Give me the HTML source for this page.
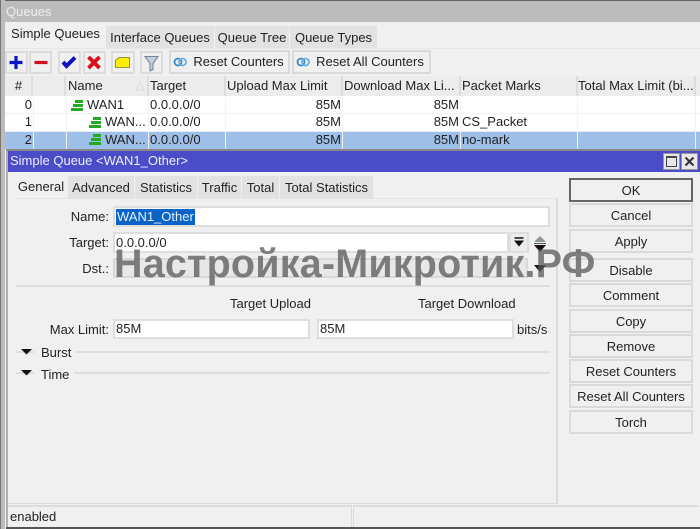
<!DOCTYPE html>
<html><head><meta charset="utf-8"><style>
html,body{margin:0;padding:0;width:700px;height:529px;overflow:hidden;background:#f0f0f0}
#r{position:relative;width:700px;height:529px;overflow:hidden;font:13px "Liberation Sans",sans-serif;color:#222;filter:blur(.35px)}
#r div,#r svg{position:absolute;box-sizing:border-box}
.t{white-space:nowrap;line-height:16px}
.tab{background:#e2e2e2;text-align:center;line-height:21px;white-space:nowrap}
.b{border:2px solid #dcdcdc;background:#f0f0f0}
.bt{border:2px solid #dadada;background:#f0f0f0;text-align:center;line-height:21px;white-space:nowrap}
.h{background:#ececec;border-right:2px solid #dcdcdc;line-height:20px;white-space:nowrap;padding-left:1px;top:76px;height:20px}
.c{white-space:nowrap;line-height:17px;height:17px}
.v{background:#f2f2f2;width:1px}
.f{background:#fff;border:2px solid #dedede;line-height:16px;padding-left:1px;white-space:nowrap}
.l{text-align:right;line-height:16px;white-space:nowrap}
.s{background:#dedede;height:2px}
</style></head><body><div id="r">
<div style="left:0;top:0;width:700px;height:22px;background:#bcbcbc"></div>
<div style="left:0;top:0;width:700px;height:1px;background:#666"></div>
<div style="left:0;top:0;width:1px;height:529px;background:#777"></div>
<div style="left:1px;top:0;width:4px;height:529px;background:#bcbcbc"></div>
<div class="t" style="left:6px;top:4px;color:#eee;font-size:13px">Queues</div>

<div class="tab" style="left:5px;top:22px;width:101px;height:27px;background:#f0f0f0;line-height:24px;color:#222">Simple Queues</div>
<div class="tab" style="left:106px;top:26px;width:108px;height:22px;line-height:24px">Interface Queues</div>
<div class="tab" style="left:215px;top:26px;width:74px;height:22px;line-height:24px">Queue Tree</div>
<div class="tab" style="left:290px;top:26px;width:87px;height:22px;line-height:24px">Queue Types</div>
<div style="left:5px;top:48px;width:695px;height:1px;background:#e6e6e6"></div>

<div class="b" style="left:5px;top:51px;width:23px;height:23px"></div>
<div class="b" style="left:29px;top:51px;width:23px;height:23px"></div>
<div class="b" style="left:58px;top:51px;width:23px;height:23px"></div>
<div class="b" style="left:83px;top:51px;width:23px;height:23px"></div>
<div class="b" style="left:111px;top:51px;width:24px;height:23px"></div>
<div class="b" style="left:140px;top:51px;width:23px;height:23px"></div>
<div class="bt" style="left:169px;top:50px;width:121px;height:24px;line-height:20px;padding-left:18px">Reset Counters</div>
<div class="bt" style="left:292px;top:50px;width:139px;height:24px;line-height:20px;padding-left:17px">Reset All Counters</div>

<svg style="left:0;top:48px" width="440" height="30" viewBox="0 48 440 30">
<path d="M16 56v13M9.500 62.500h13" stroke="#0a14c8" stroke-width="3.200" fill="none"/>
<path d="M34.500 62.500h13" stroke="#d0101c" stroke-width="3.200" fill="none"/>
<path d="M63 62l3.500 4L75 57.500" stroke="#0a10c0" stroke-width="4" fill="none"/>
<path d="M88.500 57l11 11M99.500 57l-11 11" stroke="#d81018" stroke-width="3.800" fill="none"/>
<path d="M115.500 60.500l3-3h11v10h-14z" fill="#fbee00" stroke="#77772a" stroke-width=".8"/>
<path d="M145 56.500h13l-5 7v6l-3 1.500v-7.500z" fill="#c4cee0" stroke="#7c8698" stroke-width="1.100"/>
<g fill="none" stroke-width="1.800"><circle cx="178" cy="62" r="3.500" stroke="#3a8ac8"/><circle cx="182.500" cy="62" r="3.500" stroke="#6ab0dc"/><circle cx="301" cy="62" r="3.500" stroke="#3a8ac8"/><circle cx="305.500" cy="62" r="3.500" stroke="#6ab0dc"/></g>
</svg>

<div style="left:5px;top:76px;width:695px;height:73px;background:#fff"></div>
<div class="h" style="left:5px;width:28px;text-align:center">#</div>
<div class="h" style="left:33px;width:33px"></div>
<div class="h" style="left:66px;width:83px;padding-left:2px">Name</div>
<div class="h" style="left:149px;width:77px">Target</div>
<div class="h" style="left:226px;width:117px">Upload Max Limit</div>
<div class="h" style="left:343px;width:118px">Download Max Li...</div>
<div class="h" style="left:461px;width:117px">Packet Marks</div>
<div class="h" style="left:578px;width:118px;padding-left:0">Total Max Limit (bi...</div>
<div class="h" style="left:696px;width:4px;border:0"></div>
<svg style="left:134px;top:80px" width="12" height="12"><path d="M2 10L6 2l4 8z" fill="none" stroke="#ddd"/></svg>
<div style="left:5px;top:131px;width:695px;height:18px;background:#9dbfe8"></div>
<div style="left:5px;top:113px;width:695px;height:1px;background:#f1f1f1"></div>
<div style="left:5px;top:131px;width:695px;height:1px;background:#e6eef8"></div>
<div class="v" style="left:33px;top:97px;height:52px"></div>
<div class="v" style="left:66px;top:97px;height:52px"></div>
<div class="v" style="left:148px;top:97px;height:52px"></div>
<div class="v" style="left:225px;top:97px;height:52px"></div>
<div class="v" style="left:342px;top:97px;height:52px"></div>
<div class="v" style="left:460px;top:97px;height:52px"></div>
<div class="v" style="left:577px;top:97px;height:52px"></div>
<div class="v" style="left:695px;top:97px;height:52px"></div>

<div class="c" style="left:5px;top:96px;width:27px;text-align:right">0</div>
<div class="c" style="left:5px;top:113px;width:27px;text-align:right">1</div>
<div class="c" style="left:5px;top:131px;width:27px;text-align:right">2</div>
<div class="c" style="left:87px;top:96px">WAN1</div>
<div class="c" style="left:105px;top:113px">WAN...</div>
<div class="c" style="left:105px;top:131px">WAN...</div>
<div class="c" style="left:150px;top:96px">0.0.0.0/0</div>
<div class="c" style="left:150px;top:113px">0.0.0.0/0</div>
<div class="c" style="left:150px;top:131px">0.0.0.0/0</div>
<div class="c" style="left:226px;top:96px;width:115px;text-align:right">85M</div>
<div class="c" style="left:226px;top:113px;width:115px;text-align:right">85M</div>
<div class="c" style="left:226px;top:131px;width:115px;text-align:right">85M</div>
<div class="c" style="left:343px;top:96px;width:116px;text-align:right">85M</div>
<div class="c" style="left:343px;top:113px;width:116px;text-align:right">85M</div>
<div class="c" style="left:343px;top:131px;width:116px;text-align:right">85M</div>
<div class="c" style="left:462px;top:113px">CS_Packet</div>
<div class="c" style="left:462px;top:131px">no-mark</div>
<svg style="left:0;top:96px" width="110" height="52" viewBox="0 96 110 52">
<g fill="#22aa22"><path d="M75 100h8v3h-8zM73 104h10v3H73zM71 108h12v3H71z"/><path d="M93 117h8v3h-8zM91 121h10v3H91zM89 125h12v3H89z"/><path d="M93 134h8v3h-8zM91 138h10v3H91zM89 142h12v3H89z"/></g>
</svg>

<div style="left:6px;top:149px;width:694px;height:380px;background:#f0f0f0"></div>
<div style="left:6px;top:149px;width:694px;height:2px;background:#888"></div>
<div style="left:6px;top:151px;width:2px;height:378px;background:#b0b0b0"></div>
<div style="left:8px;top:151px;width:692px;height:21px;background:#4b4dc8"></div>
<div class="t" style="left:10px;top:153px;color:#eef;font-size:13px">Simple Queue &lt;WAN1_Other&gt;</div>
<div style="left:663px;top:153px;width:17px;height:17px;background:#e8e8e8;border:1px solid #999"></div>
<div style="left:666px;top:156px;width:11px;height:11px;border:1.500px solid #444;border-top-width:2px"></div>
<div style="left:681px;top:153px;width:17px;height:17px;background:#e8e8e8;border:1px solid #999"></div>
<svg style="left:684px;top:156px" width="11" height="11"><path d="M1.500 1.500l8 8M9.500 1.500l-8 8" stroke="#333" stroke-width="2"/></svg>

<div class="tab" style="left:15px;top:173px;width:52px;height:26px;background:#f0f0f0;line-height:28px">General</div>
<div class="tab" style="left:68px;top:176px;width:66px;height:22px;line-height:23px">Advanced</div>
<div class="tab" style="left:135px;top:176px;width:62px;height:22px;line-height:23px">Statistics</div>
<div class="tab" style="left:198px;top:176px;width:43px;height:22px;line-height:23px">Traffic</div>
<div class="tab" style="left:242px;top:176px;width:37px;height:22px;line-height:23px">Total</div>
<div class="tab" style="left:280px;top:176px;width:93px;height:22px;line-height:23px">Total Statistics</div>
<div style="left:15px;top:198px;width:543px;height:1px;background:#e4e4e4"></div>
<div style="left:556px;top:199px;width:2px;height:304px;background:#dcdcdc"></div>
<div style="left:8px;top:503px;width:550px;height:1px;background:#dcdcdc"></div>

<div class="l" style="left:20px;top:209px;width:89px">Name:</div>
<div class="f" style="left:113px;top:206px;width:437px;height:21px;padding-top:1px"><span style="background:#0a64c8;color:#e8f0ff;padding:0 1px 1px">WAN1_Other</span></div>
<div class="l" style="left:20px;top:235px;width:89px">Target:</div>
<div class="f" style="left:113px;top:232px;width:396px;height:21px;padding-top:1px">0.0.0.0/0</div>
<div style="left:509px;top:232px;width:20px;height:21px;background:#ececec;border:2px solid #dedede"></div>
<svg style="left:512px;top:235px" width="14" height="14"><path d="M2.500 3h9" stroke="#111" stroke-width="1.500"/><path d="M2 5.500h10L7 11.500z" fill="#111"/></svg>
<svg style="left:532px;top:234px" width="16" height="20"><path d="M8 2l6 6H2z" fill="#8a9a92"/><path d="M2 11h12l-6 7z" fill="#111"/><path d="M2 9.500h12" stroke="#555"/></svg>
<div class="l" style="left:20px;top:261px;width:89px">Dst.:</div>
<div style="left:113px;top:258px;width:415px;height:20px;background:#e8e8e8;border:2px solid #d8d8d8"></div>
<svg style="left:532px;top:263px" width="16" height="12"><path d="M2 2h12l-6 7z" fill="#111"/></svg>
<div class="s" style="left:16px;top:285px;width:534px"></div>
<div class="t" style="left:230px;top:296px">Target Upload</div>
<div class="t" style="left:418px;top:296px">Target Download</div>
<div class="l" style="left:20px;top:322px;width:89px">Max Limit:</div>
<div class="f" style="left:113px;top:319px;width:197px;height:20px">85M</div>
<div class="f" style="left:317px;top:319px;width:197px;height:20px">85M</div>
<div class="t" style="left:517px;top:322px">bits/s</div>
<div class="s" style="left:16px;top:351px;width:18px"></div>
<svg style="left:20px;top:348px" width="13" height="8"><path d="M1 1h11L6.500 6.500z" fill="#111"/></svg>
<div class="t" style="left:41px;top:345px">Burst</div>
<div class="s" style="left:76px;top:351px;width:474px"></div>
<div class="s" style="left:16px;top:372px;width:18px"></div>
<svg style="left:20px;top:369px" width="13" height="8"><path d="M1 1h11L6.500 6.500z" fill="#111"/></svg>
<div class="t" style="left:41px;top:367px">Time</div>
<div class="s" style="left:74px;top:372px;width:476px"></div>

<div class="bt" style="left:569px;top:178px;width:124px;height:24px;border-color:#666">OK</div>
<div class="bt" style="left:569px;top:203px;width:124px;height:24px">Cancel</div>
<div class="bt" style="left:569px;top:229px;width:124px;height:24px">Apply</div>
<div class="bt" style="left:569px;top:258px;width:124px;height:24px">Disable</div>
<div class="bt" style="left:569px;top:283px;width:124px;height:24px">Comment</div>
<div class="bt" style="left:569px;top:309px;width:124px;height:24px">Copy</div>
<div class="bt" style="left:569px;top:334px;width:124px;height:24px">Remove</div>
<div class="bt" style="left:569px;top:359px;width:124px;height:24px">Reset Counters</div>
<div class="bt" style="left:569px;top:384px;width:124px;height:24px">Reset All Counters</div>
<div class="bt" style="left:569px;top:410px;width:124px;height:24px">Torch</div>

<div style="left:8px;top:505px;width:344px;height:22px;border-top:2px solid #dcdcdc;border-right:1px solid #dcdcdc"></div>
<div style="left:353px;top:505px;width:345px;height:22px;border-top:2px solid #dcdcdc;border-left:1px solid #dcdcdc"></div>
<div class="t" style="left:10px;top:509px">enabled</div>
<div style="left:6px;top:527px;width:694px;height:2px;background:#555"></div>

<div class="t" style="left:114px;top:242px;font-size:39.500px;line-height:44px;font-weight:bold;color:rgba(90,90,90,.76);letter-spacing:.2px">Настройка-Микротик.РФ</div>
</div></body></html>
